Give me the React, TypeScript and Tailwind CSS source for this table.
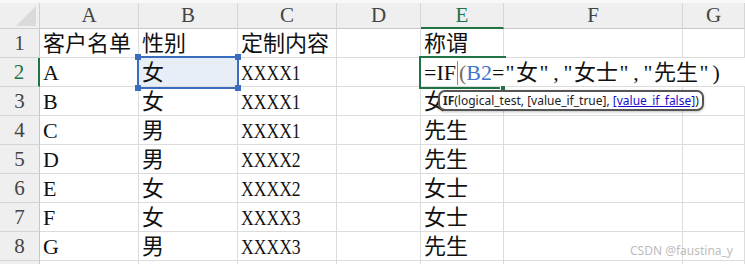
import clsx from "clsx";

// column widths include each cell's right grid line
const COLS = "grid grid-cols-[40px_99px_99px_99px_84px_83px_179px_1fr]";
const LETTERS = ["A", "B", "C", "D", "E", "F", "G"];

const ROWS: string[][] = [
  ["客户名单", "性别", "定制内容", "", "称谓", "", ""],
  ["A", "女", "XXXX1", "", "", "", ""],
  ["B", "女", "XXXX1", "", "女士", "", ""],
  ["C", "男", "XXXX1", "", "先生", "", ""],
  ["D", "男", "XXXX2", "", "先生", "", ""],
  ["E", "女", "XXXX2", "", "女士", "", ""],
  ["F", "女", "XXXX3", "", "女士", "", ""],
  ["G", "男", "XXXX3", "", "先生", "", ""],
  ["", "", "", "", "", "", ""],
];

const sheetFont = "font-['Liberation_Serif','Noto_Sans_CJK_SC',serif]";

function CellText({ value }: { value: string }) {
  if (/^[A-Z0-9]{2,}$/.test(value)) {
    return <span className="inline-block origin-left scale-x-[0.8]">{value}</span>;
  }
  return <>{value}</>;
}

// punctuation in the formula takes a fixed half-width slot
function Formula({ text }: { text: string }) {
  return (
    <>
      {Array.from(text).map((ch, i) =>
        /[\u4e00-\u9fff]/.test(ch) ? (
          <span key={i}>{ch}</span>
        ) : (
          <span key={i} className="inline-block w-[12px] text-center">
            {ch}
          </span>
        )
      )}
    </>
  );
}

function Corner() {
  return (
    <div className="relative border-r border-b border-[#d0d0d0] bg-[#efefef]">
      <svg className="absolute left-[16px] top-[3px]" width="20" height="20" viewBox="0 0 20 20">
        <polygon points="20,0 20,20 0,20" fill="#dadada" />
      </svg>
    </div>
  );
}

function Handle({ className }: { className: string }) {
  return <div className={clsx("absolute h-[6px] w-[6px] bg-[#3a6cc0]", className)} />;
}

export default function App() {
  return (
    <div className={clsx("relative h-[264px] w-[745px] overflow-hidden bg-white text-[#111]", sheetFont)}>
      <div className="h-[3px] bg-[#f8f8f8]" />

      {/* column headers */}
      <div className={clsx(COLS, "h-[26px]")}>
        <Corner />
        {LETTERS.map((l) => (
          <div
            key={l}
            className={clsx(
              "flex items-center justify-center border-r border-[#d6d6d6] bg-[#efefef] text-[21px] leading-none",
              l === "E" ? "border-b-2 border-b-[#217346] text-[#217346]" : "border-b border-b-[#c8c8c8] text-[#444]"
            )}
          >
            {l}
          </div>
        ))}
      </div>

      {/* rows */}
      {ROWS.map((row, i) => (
        <div key={i} className={clsx(COLS, "h-[29px]")}>
          <div
            className={clsx(
              "flex items-center justify-center border-b border-[#d4d4d4] bg-[#efefef] text-[21px] leading-none",
              i === 1 ? "border-r-2 border-r-[#217346] text-[#217346]" : "border-r border-r-[#c8c8c8] text-[#444]"
            )}
          >
            {i < 8 ? i + 1 : ""}
          </div>
          {row.map((v, j) => (
            <div
              key={j}
              className={clsx(
                "flex items-center overflow-visible whitespace-nowrap border-r border-b border-[#dcdcdc] pl-[3px] pt-[2px] text-[22px] leading-none",
                i === 1 && j === 1 && "bg-[#e8eef8]"
              )}
            >
              <CellText value={v} />
            </div>
          ))}
        </div>
      ))}

      {/* selected range B2 */}
      <div className="absolute left-[137px] top-[56px] h-[33px] w-[102px] border-2 border-[#3a6cc0]">
        <Handle className="left-[-4px] top-[-4px]" />
        <Handle className="right-[-4px] top-[-4px]" />
        <Handle className="bottom-[-4px] left-[-4px]" />
        <Handle className="bottom-[-4px] right-[-4px]" />
      </div>

      {/* in-cell editor on E2 */}
      <div className="absolute left-[421px] right-0 top-[58px] flex h-[28px] items-center bg-white pl-[3px] pt-[2px] text-[22px] leading-none whitespace-nowrap">
        <span>=IF</span>
        <span className="mx-[1px] h-[24px] w-px self-center bg-[#8a8a8a]" />
        <span className="text-[#7a6a58]">(</span>
        <span className="text-[#3f74c9]">B2</span>
        <Formula text={'="女","女士","先生")'} />
      </div>
      <div className="absolute left-[419px] top-[56px] h-[33px] w-[87px] border-y-2 border-l-2 border-[#217346]" />
      <div className="absolute left-[500px] top-[85px] h-[6px] w-[6px] border border-white bg-[#217346]" />

      {/* function argument tip */}
      <div className="absolute left-[438px] top-[90px] flex h-[21px] items-center rounded-[7px] border-2 border-[#555] bg-white px-[3px] font-['Noto_Sans',sans-serif] text-[12px] leading-none text-[#222] shadow-[0_1px_3px_rgba(0,0,0,0.25)]">
        <span className="font-bold">IF</span>
        <span>(logical_test, [value_if_true],&nbsp;</span>
        <span className="text-[#1a0dcc] underline">[value_if_false]</span>
        <span>)</span>
      </div>

      <div className="absolute bottom-[7px] right-[12px] font-['Noto_Sans',sans-serif] text-[12px] leading-none text-[#bdbdbd]">
        CSDN @faustina_y
      </div>
    </div>
  );
}
